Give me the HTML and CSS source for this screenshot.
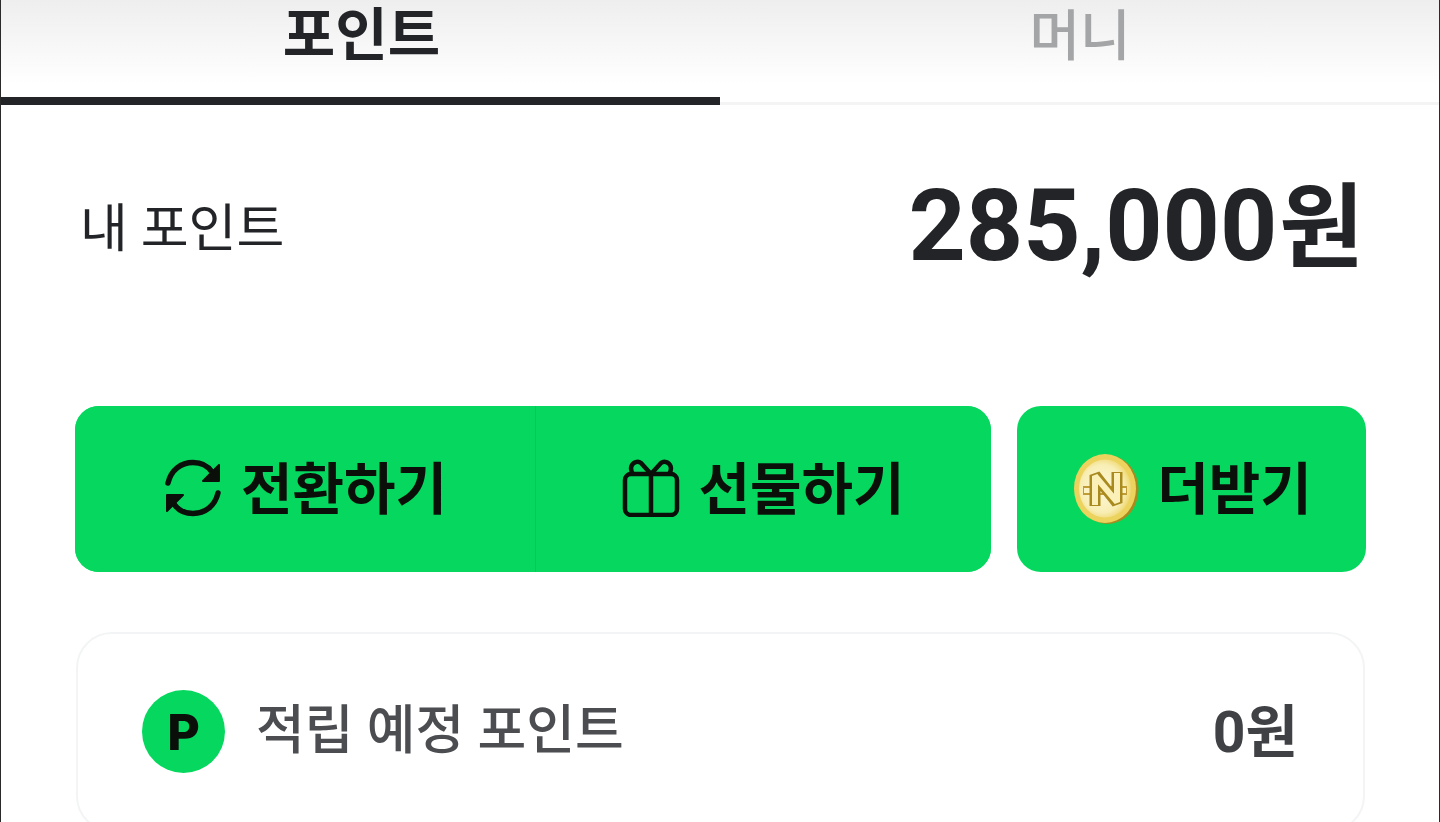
FILE: index.html
```html
<!DOCTYPE html>
<html lang="ko">
<head>
<meta charset="utf-8">
<title>포인트</title>
<link rel="stylesheet" href="styles.css">
</head>
<body>
<div class="screen">
  <nav class="tabs">
    <div class="tab tab-active">포인트</div>
    <div class="tab">머니</div>
  </nav>
  <section class="balance">
    <span class="balance-label">내 포인트</span>
    <span class="balance-value">285,000<span class="balance-unit">원</span></span>
  </section>
  <section class="actions">
    <div class="action-group">
      <div class="action action-first">
        <svg class="icon" viewBox="0 0 60 60" fill="none" stroke="#0a0f0a" stroke-width="5.5" stroke-linecap="round">
          <path d="M5 25C8 12 18 4.500 30 4.500C38 4.500 45 8 49 14"/>
          <path d="M55 35C52 48 42 55.500 30 55.500C22 55.500 15 52 11 46"/>
          <path d="M56 7L56 23L40 23Z" fill="#0a0f0a" stroke-width="2" stroke-linejoin="round"/>
          <path d="M4 53L4 37L20 37Z" fill="#0a0f0a" stroke-width="2" stroke-linejoin="round"/>
        </svg>
        <span class="action-text">전환하기</span>
      </div>
      <div class="action action-second">
        <svg class="icon icon-gift" viewBox="0 0 58 58" fill="none" stroke="#0a0f0a" stroke-width="4.500" stroke-linejoin="round">
          <rect x="3" y="15" width="52" height="41" rx="6"/>
          <path d="M29 15V56"/>
          <path d="M29 15L19 4C16 1.500 11 3 9.500 7C8.500 10 9.500 13 11 15"/>
          <path d="M29 15L39 4C42 1.500 47 3 48.500 7C49.500 10 48.500 13 47 15"/>
        </svg>
        <span class="action-text">선물하기</span>
      </div>
    </div>
    <div class="action action-more">
      <svg class="icon icon-coin" viewBox="0 0 66 72">
        <defs>
          <radialGradient id="coinFace" cx="45%" cy="50%" r="55%">
            <stop offset="0" stop-color="#fdf8dc"/>
            <stop offset="0.75" stop-color="#f8eeb4"/>
            <stop offset="1" stop-color="#efd872"/>
          </radialGradient>
        </defs>
        <ellipse cx="34.500" cy="36.500" rx="31" ry="34.500" fill="#a98a1f"/>
        <ellipse cx="32" cy="35.500" rx="31" ry="34.500" fill="#ecd35e"/>
        <ellipse cx="32" cy="35.500" rx="26" ry="29" fill="url(#coinFace)"/>
        <g fill="none">
          <path d="M10 37.500H54" stroke="#bf9c35" stroke-width="9"/>
          <path d="M11 37.500H53" stroke="#fbf3c4" stroke-width="5"/>
          <path d="M22 53V22L44 50V19" stroke="#a98a1f" stroke-width="11" stroke-linejoin="bevel"/>
          <path d="M22 52V23L44 49V20" stroke="#fbf0b8" stroke-width="6" stroke-linejoin="bevel"/>
        </g>
      </svg>
      <span class="action-text">더받기</span>
    </div>
  </section>
  <section class="pending">
    <div class="pending-main">
      <span class="badge">P</span>
      <span class="pending-label">적립 예정 포인트</span>
    </div>
    <span class="pending-value">0원</span>
  </section>
</div>
</body>
</html>
```

FILE: styles.css
```css
* {
  box-sizing: border-box;
}

html,
body {
  margin: 0;
  height: 100%;
  overflow: hidden;
  background: #fff;
}

.screen {
  height: 822px;
  overflow: hidden;
  border-left: 1px solid #2a2a2a;
  border-right: 1px solid #2a2a2a;
  font-family: "Roboto", "Noto Sans CJK KR", sans-serif;
  color: #222427;
}

.tabs {
  display: flex;
  height: 105px;
  margin: 0 -1px;
  background: linear-gradient(#eeeeef 0, #f7f7f8 45px, #fff 85px);
}

.tab {
  flex: 1;
  padding-top: 6px;
  text-align: center;
  font-size: 55px;
  line-height: 60px;
  font-weight: 500;
  color: #a4a5a7;
  border-bottom: 3px solid #f4f4f5;
}

.tab-active {
  text-indent: 3px;
  color: #222427;
  font-size: 57px;
  font-weight: 700;
  border-bottom: 8px solid #222427;
}

.balance {
  display: flex;
  justify-content: space-between;
  align-items: center;
  height: 240px;
  padding: 0 75px 0 79px;
}

.balance-label {
  font-size: 52px;
  line-height: 60px;
  font-weight: 400;
  margin-top: 9px;
}

.balance-value {
  font-size: 100px;
  line-height: 100px;
  font-weight: 700;
  margin-top: 4px;
}

.balance-unit {
  font-size: 92px;
  margin-left: 2px;
}

.actions {
  display: flex;
  gap: 26px;
  height: 166px;
  margin-top: 61px;
  padding: 0 73px 0 74px;
}

.action-group {
  display: flex;
  flex: none;
  width: 916px;
  border-radius: 24px;
  background: #06d85f;
  overflow: hidden;
}

.action {
  flex: 1;
  display: flex;
  align-items: center;
  justify-content: center;
  gap: 18px;
  font-size: 56px;
  font-weight: 700;
  color: #0a0f0a;
  background: #06d85f;
}

.action-text {
  margin-top: -10px;
}

.action-first {
  flex: none;
  width: 460px;
}

.action-second {
  flex: none;
  width: 456px;
  border-left: 1px solid #08c757;
}

.action-more {
  flex: 1;
  border-radius: 24px;
}

.icon {
  width: 60px;
  height: 60px;
  flex: none;
  margin-top: -2px;
}

.icon-gift {
  width: 58px;
  height: 58px;
  margin-top: -3px;
}

.icon-coin {
  width: 66px;
  height: 72px;
  margin-top: 0;
  margin-left: 2px;
}

.pending {
  display: flex;
  justify-content: space-between;
  align-items: flex-start;
  height: 200px;
  margin: 60px 74px 0 75px;
  padding: 0 65px 0 64px;
  border: 2px solid #f3f4f5;
  border-radius: 36px;
}

.pending-main {
  display: flex;
  align-items: center;
  gap: 31px;
  margin-top: 56px;
}

.badge {
  width: 83px;
  height: 83px;
  padding-top: 1px;
  border-radius: 50%;
  background: #06d85f;
  color: #0a0f0a;
  display: flex;
  align-items: center;
  justify-content: center;
  font-size: 50px;
  font-weight: 800;
  font-family: "Inter", "Roboto", sans-serif;
}

.pending-label {
  font-size: 53px;
  font-weight: 500;
  color: #4b4d51;
  margin-top: -12px;
}

.pending-value {
  margin-top: 64px;
  font-size: 57px;
  line-height: 70px;
  font-weight: 700;
  color: #3f4145;
}
```
